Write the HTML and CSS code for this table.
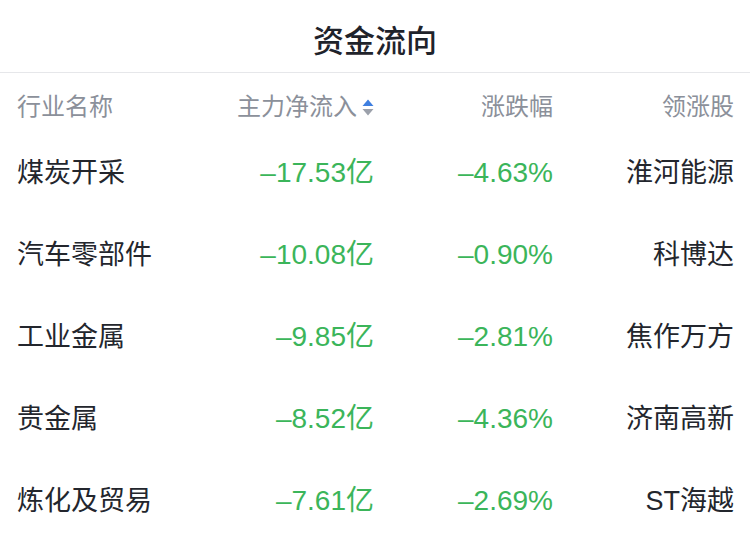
FILE: index.html
```html
<!DOCTYPE html>
<html lang="zh-CN">
<head>
<meta charset="utf-8">
<link rel="stylesheet" href="styles.css">
</head>
<body>
<div class="page">
  <div class="title">资金流向</div>
  <div class="table">
    <div class="row head">
      <div class="c1">行业名称</div>
      <div class="c2">主力净流入<span class="sort"><svg width="12" height="17" viewBox="0 0 12 17"><path d="M6 0.5 L11.5 7 L0.5 7 Z" fill="#3f7fe0"/><path d="M0.5 10 L11.5 10 L6 16.5 Z" fill="#9ca1ab"/></svg></span></div>
      <div class="c3">涨跌幅</div>
      <div class="c4">领涨股</div>
    </div>
    <div class="row">
      <div class="c1">煤炭开采</div>
      <div class="c2 num">–17.53亿</div>
      <div class="c3 num">–4.63%</div>
      <div class="c4">淮河能源</div>
    </div>
    <div class="row">
      <div class="c1">汽车零部件</div>
      <div class="c2 num">–10.08亿</div>
      <div class="c3 num">–0.90%</div>
      <div class="c4">科博达</div>
    </div>
    <div class="row">
      <div class="c1">工业金属</div>
      <div class="c2 num">–9.85亿</div>
      <div class="c3 num">–2.81%</div>
      <div class="c4">焦作万方</div>
    </div>
    <div class="row">
      <div class="c1">贵金属</div>
      <div class="c2 num">–8.52亿</div>
      <div class="c3 num">–4.36%</div>
      <div class="c4">济南高新</div>
    </div>
    <div class="row">
      <div class="c1">炼化及贸易</div>
      <div class="c2 num">–7.61亿</div>
      <div class="c3 num">–2.69%</div>
      <div class="c4">ST海越</div>
    </div>
  </div>
</div>
</body>
</html>
```
FILE: styles.css
```css
html, body {
  margin: 0;
  padding: 0;
  background: #ffffff;
}
.page {
  width: 750px;
  height: 548px;
  overflow: hidden;
  font-family: "Liberation Sans", "Noto Sans CJK SC", sans-serif;
  color: #23262d;
}
.title {
  height: 73px;
  line-height: 73px;
  padding-top: 2px;
  box-sizing: border-box;
  text-align: center;
  font-size: 31px;
  font-weight: 500;
  font-family: "Noto Sans CJK SC", sans-serif;
  color: #1f232b;
  border-bottom: 1px solid #e6e7ea;
}
.table {
  padding: 0 16px 0 17px;
}
.row {
  display: grid;
  grid-template-columns: 177px 180px 179px 181px;
  align-items: center;
  height: 82px;
  font-size: 27px;
  line-height: 36px;
}
.row.head {
  height: 59px;
  padding-top: 18px;
  box-sizing: border-box;
  align-items: start;
  font-size: 24px;
  line-height: 32px;
  color: #8b909a;
}
.c1 { text-align: left; }
.c2, .c3, .c4 { text-align: right; white-space: nowrap; }
.num {
  color: #3bb55a;
  font-size: 28px;
}
.sort {
  display: inline-block;
  vertical-align: middle;
  margin-left: 5px;
  margin-top: -3px;
}
.sort svg { display: block; }
```
